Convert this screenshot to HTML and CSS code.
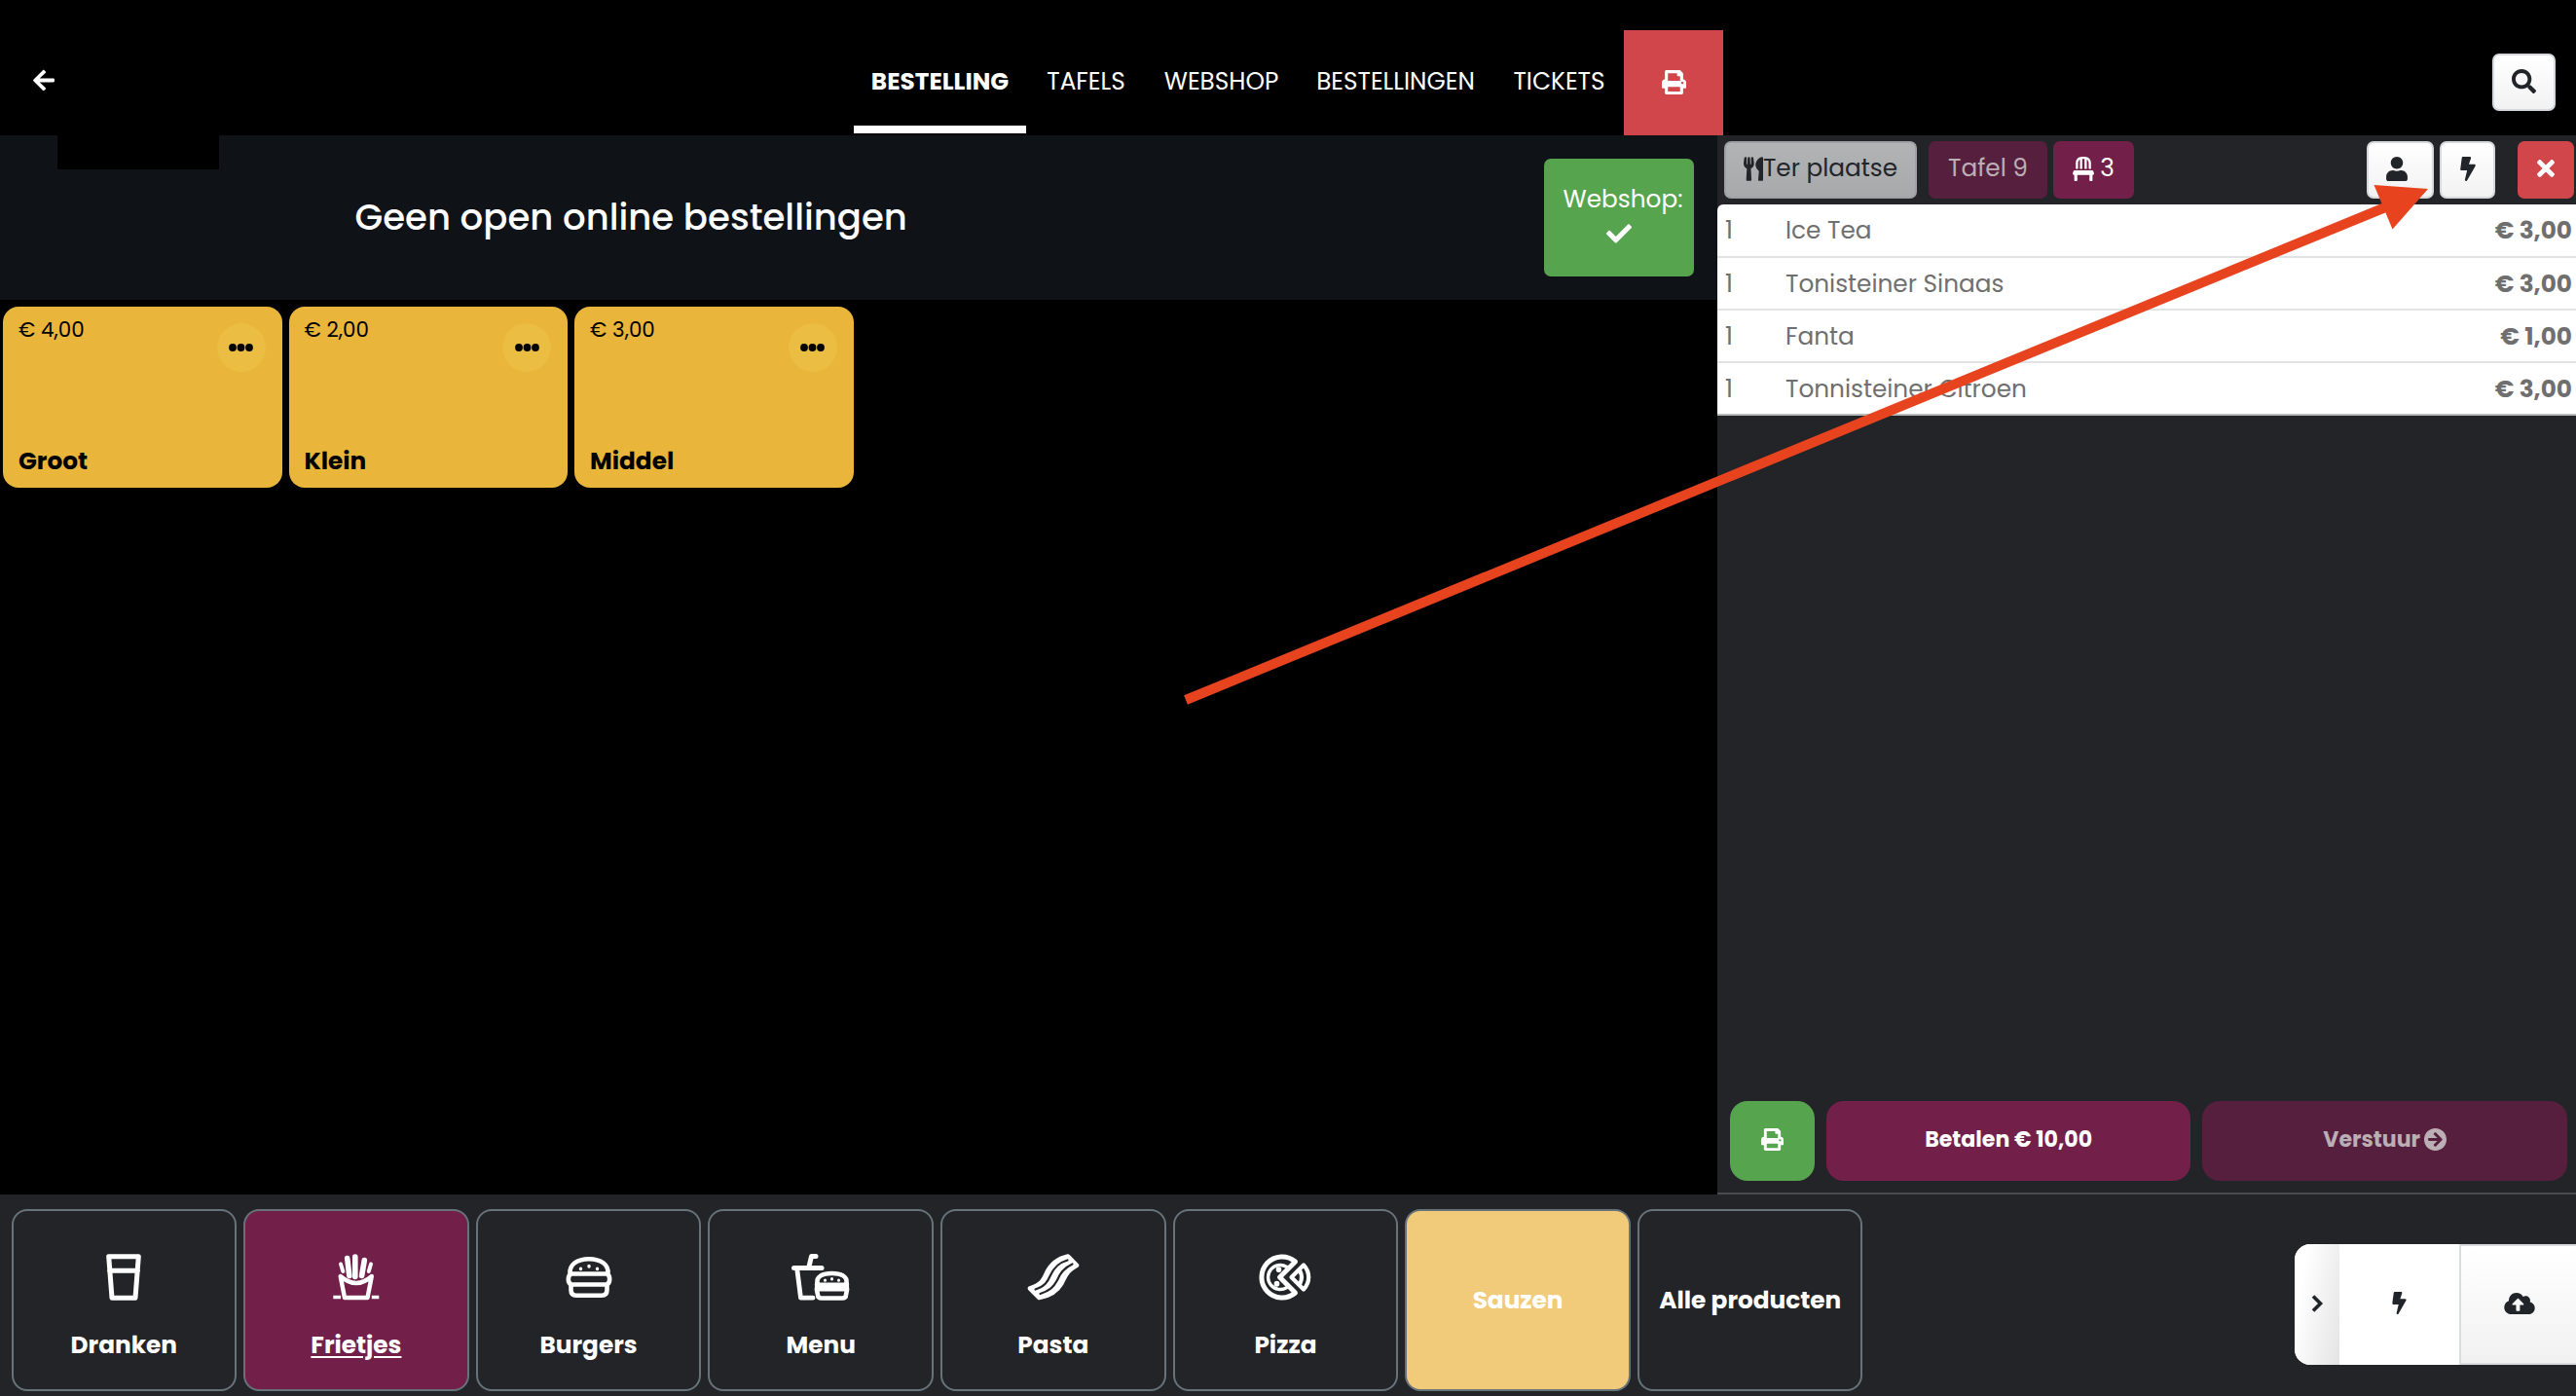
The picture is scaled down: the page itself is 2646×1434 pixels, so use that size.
FILE: index.html
```html
<!DOCTYPE html>
<html lang="nl">
<head>
<meta charset="utf-8">
<title>Kassa</title>
<link rel="stylesheet" href="styles.css">
</head>
<body>
<svg width="0" height="0" class="sprite" aria-hidden="true">
  <symbol id="bolt" viewBox="0 0 320 512"><path d="M296 160H180.6l42.6-129.8C227.2 15 215.7 0 200 0H56C44 0 33.8 8.9 32.2 20.8l-32 240C-1.7 275.2 9.5 288 24 288h118.7L96.6 482.5c-3.6 15.2 8 29.5 23.3 29.5 8.4 0 16.4-4.4 20.8-12l176-304c9.3-15.9-2.2-36-20.7-36z"/></symbol>
  <symbol id="print" viewBox="0 0 512 512"><path d="M448 192V77.25c0-8.49-3.37-16.62-9.37-22.63L393.37 9.37c-6-6-14.14-9.37-22.63-9.37H96C78.33 0 64 14.33 64 32v160c-35.35 0-64 28.65-64 64v112c0 8.84 7.16 16 16 16h48v96c0 17.67 14.33 32 32 32h320c17.67 0 32-14.33 32-32v-96h48c8.84 0 16-7.16 16-16V256c0-35.35-28.65-64-64-64zm-64 256H128v-96h256v96zm0-224H128V64h192v48c0 8.84 7.16 16 16 16h48v96zm48 72c-13.25 0-24-10.75-24-24 0-13.26 10.75-24 24-24s24 10.74 24 24c0 13.25-10.75 24-24 24z"/></symbol>
  <symbol id="dots" viewBox="0 0 25 8"><circle cx="4" cy="4" r="3.9"/><circle cx="12.5" cy="4" r="3.9"/><circle cx="21" cy="4" r="3.9"/></symbol>
</svg>

<header class="topbar">
  <svg class="back" viewBox="0 0 448 512"><path d="M257.5 445.1l-22.2 22.2c-9.4 9.4-24.6 9.4-33.9 0L7 273c-9.4-9.4-9.4-24.6 0-33.9L201.4 44.7c9.4-9.4 24.6-9.4 33.9 0l22.2 22.2c9.5 9.5 9.3 25-.4 34.3L136.6 216H424c13.3 0 24 10.7 24 24v32c0 13.3-10.7 24-24 24H136.6l120.5 114.8c9.8 9.3 10 24.8.4 34.3z"/></svg>
  <div class="brand"></div>
  <nav class="tabs">
    <a class="tab active">BESTELLING</a>
    <a class="tab">TAFELS</a>
    <a class="tab">WEBSHOP</a>
    <a class="tab">BESTELLINGEN</a>
    <a class="tab">TICKETS</a>
    <a class="tab-print"><svg><use href="#print"/></svg></a>
  </nav>
  <button class="btn light search"><svg viewBox="0 0 512 512"><path d="M505 442.7L405.3 343c-4.5-4.5-10.6-7-17-7H372c27.6-35.3 44-79.7 44-128C416 93.1 322.9 0 208 0S0 93.1 0 208s93.1 208 208 208c48.3 0 92.7-16.4 128-44v16.3c0 6.4 2.5 12.5 7 17l99.7 99.7c9.4 9.4 24.6 9.4 33.9 0l28.3-28.3c9.4-9.4 9.4-24.6.1-34zM208 336c-70.7 0-128-57.2-128-128 0-70.7 57.2-128 128-128 70.7 0 128 57.2 128 128 0 70.7-57.2 128-128 128z"/></svg></button>
</header>

<main class="main">
  <section class="catalog">
    <div class="banner">
      <h1 class="banner-title">Geen open online bestellingen</h1>
      <div class="webshop">
        <span class="webshop-label">Webshop:</span>
        <svg viewBox="0 0 512 512"><path d="M173.898 439.404l-166.4-166.4c-9.997-9.997-9.997-26.206 0-36.204l36.203-36.204c9.997-9.998 26.207-9.998 36.204 0L192 312.69 432.095 72.596c9.997-9.997 26.207-9.997 36.204 0l36.203 36.204c9.997 9.997 9.997 26.206 0 36.204l-294.4 294.401c-9.998 9.997-26.207 9.997-36.204-.001z"/></svg>
      </div>
    </div>
    <div class="products">
      <article class="product"><span class="price">€ 4,00</span><i class="more"><svg><use href="#dots"/></svg></i><b class="name">Groot</b></article>
      <article class="product"><span class="price">€ 2,00</span><i class="more"><svg><use href="#dots"/></svg></i><b class="name">Klein</b></article>
      <article class="product"><span class="price">€ 3,00</span><i class="more"><svg><use href="#dots"/></svg></i><b class="name">Middel</b></article>
    </div>
  </section>

  <aside class="order">
    <div class="order-bar">
      <button class="btn light place"><svg viewBox="0 0 416 512"><path d="M207.9 15.2c.8 4.7 16.1 94.5 16.1 128.8 0 52.3-27.8 89.6-68.9 104.6L168 486.7c.7 13.7-10.2 25.3-24 25.3H80c-13.7 0-24.7-11.5-24-25.3l12.9-238.1C27.7 233.6 0 196.2 0 144 0 109.6 15.3 19.9 16.1 15.2 19.3-5.1 61.4-5.4 64 16.3v141.2c1.3 3.4 15.1 3.2 16 0 1.4-25.3 7.9-139.2 8-141.8 3.3-20.8 44.7-20.8 47.9 0 .2 2.7 6.6 116.5 8 141.8.9 3.2 14.8 3.4 16 0V16.3c2.6-21.6 44.8-21.4 47.9-1.1zm119.2 285.7l-15 185.1c-1.2 14 9.9 26 23.9 26h56c13.3 0 24-10.7 24-24V24c0-13.2-10.7-24-24-24-82.5 0-221.4 178.5-64.9 300.9z"/></svg><span>Ter plaatse</span></button>
      <button class="btn plum table">Tafel 9</button>
      <button class="btn plum seats"><svg viewBox="0 0 448 512"><path d="M112 128c0-29.5 16.2-55 40-68.9V256h48V48h48v208h48V59.1c23.8 13.9 40 39.4 40 68.9v128h48V128C384 57.3 326.7 0 256 0h-64C121.3 0 64 57.3 64 128v128h48zm334.3 213.9l-10.7-32c-4.4-13.1-16.6-21.9-30.4-21.9H42.7c-13.8 0-26 8.8-30.4 21.9l-10.7 32C-5.2 362.6 10.2 384 32 384v112c0 8.8 7.2 16 16 16h32c8.8 0 16-7.2 16-16V384h256v112c0 8.8 7.2 16 16 16h32c8.8 0 16-7.2 16-16V384c21.8 0 37.2-21.4 30.3-42.1z"/></svg><span>3</span></button>
      <button class="btn light user"><svg viewBox="0 0 448 512"><path d="M224 256c70.7 0 128-57.3 128-128S294.7 0 224 0 96 57.3 96 128s57.3 128 128 128zm89.6 32h-16.7c-22.2 10.2-46.9 16-72.9 16s-50.6-5.8-72.9-16h-16.7C60.2 288 0 348.2 0 422.4V464c0 26.5 21.5 48 48 48h352c26.5 0 48-21.5 48-48v-41.6c0-74.2-60.2-134.4-134.4-134.4z"/></svg></button>
      <button class="btn light flash"><svg><use href="#bolt"/></svg></button>
      <button class="btn red close"><svg viewBox="0 0 352 512"><path d="M242.72 256l100.07-100.07c12.28-12.28 12.28-32.19 0-44.48l-22.24-22.24c-12.28-12.28-32.19-12.28-44.48 0L176 189.28 75.93 89.21c-12.28-12.28-32.19-12.28-44.48 0L9.21 111.45c-12.28 12.28-12.28 32.19 0 44.48L109.28 256 9.21 356.07c-12.28 12.28-12.28 32.19 0 44.48l22.24 22.24c12.28 12.28 32.2 12.28 44.48 0L176 322.72l100.07 100.07c12.28 12.28 32.2 12.28 44.48 0l22.24-22.24c12.28-12.28 12.28-32.19 0-44.48L242.72 256z"/></svg></button>
    </div>
    <ul class="lines">
      <li><span class="qty">1</span><span>Ice Tea</span><b>€ 3,00</b></li>
      <li><span class="qty">1</span><span>Tonisteiner Sinaas</span><b>€ 3,00</b></li>
      <li><span class="qty">1</span><span>Fanta</span><b>€ 1,00</b></li>
      <li><span class="qty">1</span><span>Tonnisteiner Citroen</span><b>€ 3,00</b></li>
    </ul>
    <div class="actions">
      <button class="act green"><svg><use href="#print"/></svg></button>
      <button class="act plum wide">Betalen € 10,00</button>
      <button class="act plum wide dim"><span>Verstuur</span><svg viewBox="8 8 496 496"><path d="M256 8c137 0 248 111 248 248S393 504 256 504 8 393 8 256 119 8 256 8zm-28.9 143.6l75.5 72.4H120c-13.3 0-24 10.7-24 24v16c0 13.3 10.7 24 24 24h182.6l-75.5 72.4c-9.7 9.3-9.9 24.8-.4 34.3l11 10.9c9.4 9.4 24.6 9.4 33.9 0L404.3 273c9.4-9.4 9.4-24.6 0-33.9L271.6 106.3c-9.4-9.4-24.6-9.4-33.9 0l-11 10.9c-9.5 9.6-9.3 25.1.4 34.4z"/></svg></button>
    </div>
  </aside>
</main>

<footer class="bottom">
  <div class="cats">
    <a class="cat"><svg viewBox="0 0 60 48"><path d="M14.7 2.7H45.3L42 45.2H18ZM15.5 17.2H44.5" stroke-width="5"/></svg><span>Dranken</span></a>
    <a class="cat selected"><svg viewBox="0 0 60 48"><path d="M13.7 23 18 45H41.5L45.8 23Q30 37 13.7 23Z" stroke-width="4.4"/><path d="M14 10.5 16.3 18M45 10.5 42.8 18" stroke-width="4"/><path d="M20.7 4.5 22.8 22.5M28.8 3V23.5M38.3 6.5 35.6 22.5" stroke-width="5.6"/><path d="M6.3 44.5H14M45.8 44.5H53.3" stroke-width="3.6" stroke-linecap="butt"/></svg><span>Frietjes</span></a>
    <a class="cat"><svg viewBox="0 0 60 48"><path d="M10.5 20.5C9.5 11 18 5.2 30 5.2S50.5 11 49.5 20.5ZM12 20.5Q8.800 21.500 8.800 26T12 31.500H48Q51.200 30.500 51.200 26T48 20.500M11.500 31.500V37Q11.500 42.700 17 42.700H43Q48.500 42.700 48.500 37V31.500" stroke-width="4.600"/><path d="M21.500 15.200V15.600M30 12.500V13M38.500 15.200V15.600" stroke-width="3.400"/></svg><span>Burgers</span></a>
    <a class="cat"><svg viewBox="0 0 60 48"><path d="M25 2.500H20.500L18 13" stroke-width="5"/><path d="M2.500 14.500H31" stroke-width="5"/><path d="M5.800 16 9.500 45.200H22" stroke-width="4.800"/><path d="M26.500 30C25.500 23 32 20 41.500 20S57.500 23 56.500 30L57 37 56 42Q56 45.500 52 45.500H31Q27 45.500 27 42L26 37Z" stroke-width="4.600"/><path d="M26 31.800H57M26 36.200H57" stroke-width="4.600"/><path d="M34.500 27V27.300M41.500 25.500V26M48.500 27V27.300" stroke-width="3"/></svg><span>Menu</span></a>
    <a class="cat"><svg viewBox="0 0 60 48"><path d="M45 2.500 54 11.800C43 18 43 22 38.500 30C34 38 26 43 15.500 45L6 35.500C17 32 19.500 28 23 20C27 11 34 5 45 2.500Z" fill="#fff" stroke-width="4.600"/><path d="M11.500 36.500C21 33.500 24 29 27 22C31 13 36 9 44.500 6.500M16.500 41C26 38 30 34.500 34 27C37 19 41 14.500 49.500 10.500" stroke="#232428" stroke-width="2.200"/></svg><span>Pasta</span></a>
    <a class="cat"><svg viewBox="0 0 60 48"><path d="M40.500 8A21 21 0 1 0 40.500 40L24.500 24Z" stroke-width="5"/><path d="M31.500 13.300A12.500 12.500 0 1 0 31.500 34.700" stroke-width="3.400"/><path d="M23.500 16V16.300M21.500 30.500V31" stroke-width="5.600"/><path d="M36.500 24 49 11.500Q54.200 17 54.200 24T49 36.500ZM45.500 18Q48.500 24 45.500 30" stroke-width="4.200"/></svg><span>Pizza</span></a>
    <a class="cat sand plain"><span>Sauzen</span></a>
    <a class="cat plain"><span>Alle producten</span></a>
  </div>
  <div class="drawer">
    <div class="drawer-toggle"><svg viewBox="0 0 14 20"><path d="M3 2.500 10.500 10 3 17.500"/></svg></div>
    <div class="drawer-cell"><svg class="d-bolt"><use href="#bolt"/></svg></div>
    <div class="drawer-cell shaded"><svg class="d-cloud" viewBox="0 32 640 448"><path d="M537.6 226.6c4.1-10.7 6.4-22.4 6.4-34.6 0-53-43-96-96-96-19.7 0-38.1 6-53.3 16.2C367 64.2 315.3 32 256 32c-88.4 0-160 71.6-160 160 0 2.7.1 5.4.2 8.1C40.2 219.8 0 273.2 0 336c0 79.5 64.5 144 144 144h368c70.7 0 128-57.3 128-128 0-61.9-44-113.6-102.4-125.4zM393.4 288H328v112c0 8.8-7.2 16-16 16h-48c-8.8 0-16-7.2-16-16V288h-65.4c-14.3 0-21.4-17.2-11.3-27.3l105.4-105.4c6.2-6.2 16.4-6.2 22.6 0l105.4 105.4c10.1 10.1 2.9 27.3-11.3 27.3z"/></svg></div>
  </div>
</footer>

<svg class="pointer" viewBox="0 0 2646 1434"><path d="M1218 719 2455 211" fill="none" stroke="#e8431f" stroke-width="10"/><path d="M2438.500 190 2494 194 2457.500 235.500Z" fill="#e8431f"/></svg>
</body>
</html>
```
FILE: styles.css
```css
* { box-sizing: border-box; }

body {
  margin: 0;
  width: 2646px;
  height: 1434px;
  overflow: hidden;
  display: flex;
  flex-direction: column;
  background: #000;
  color: #fff;
  font-family: Poppins, Inter, "Noto Sans", sans-serif;
  font-size: 24.75px;
  line-height: 36px;
}

svg { display: block; fill: currentColor; flex: none; }
.sprite { position: absolute; }
button { font: inherit; color: inherit; border: 0; padding: 0; }

/* Top bar */
.topbar {
  position: relative;
  height: 139px;
  flex: none;
  display: flex;
  align-items: flex-start;
}
.back { width: 22px; height: 25px; margin: 70px 0 0 34px; }
.brand { position: absolute; left: 59px; top: 60px; width: 166px; height: 114px; background: #000; }
.tabs { display: flex; height: 108px; margin: 31px 0 0 821px; }
.tab {
  display: flex;
  align-items: center;
  justify-content: center;
  height: 106px;
  border-bottom: 8px solid transparent;
  padding: 7px 0 0 1px;
  white-space: nowrap;
}
.tab:nth-child(1) { width: 177px; }
.tab:nth-child(2) { width: 122px; }
.tab:nth-child(3) { width: 156px; }
.tab:nth-child(4) { width: 202px; }
.tab:nth-child(5) { width: 134px; }
.tab.active { font-weight: 700; border-color: #fff; padding-left: 0; }
.tab-print {
  width: 102px;
  display: flex;
  align-items: center;
  justify-content: center;
  padding-bottom: 2px;
  background: #d1464a;
}
.tab-print svg { width: 25px; height: 25px; }
.search { width: 65px; margin: 55px 21px 0 auto; }
.search svg { width: 25px; height: 25px; }

/* Buttons */
.btn {
  height: 59px;
  border-radius: 7px;
  display: flex;
  align-items: center;
  justify-content: center;
  flex: none;
  white-space: nowrap;
  padding-bottom: 2px;
}
.light {
  color: #212529;
  background: linear-gradient(#fff, #f2f2f2);
  border: 2px solid #d5d8dc;
}
.plum { background: #721f4a; }
.red { background: #d1464a; }
.green { background: #57a44f; }

/* Main */
.main { display: flex; height: 1088px; flex: none; }
.catalog { width: 1764px; }
.banner {
  height: 169px;
  background: #0f1217;
  display: flex;
  align-items: center;
  justify-content: space-between;
  padding-right: 24px;
}
.banner-title {
  margin: 0 0 2px 364.5px;
  font-size: 37.1px;
  line-height: 54px;
  font-weight: 500;
  white-space: nowrap;
}
.webshop {
  width: 154px;
  height: 121px;
  border-radius: 7px;
  background: #57a44f;
  display: flex;
  flex-direction: column;
  align-items: center;
  padding: 24px 0 0 8px;
}
.webshop svg { width: 26px; height: 26px; margin: 4px 8px 0 0; }

.products { display: flex; gap: 7px; padding: 7px 3px; }
.product {
  width: 286.5px;
  height: 186px;
  border-radius: 16px;
  background: #e9b53a;
  color: #000;
  padding: 8px 17px 9px 16px;
  display: grid;
  grid-template-columns: 1fr 50px;
  align-content: space-between;
}
.price { font-size: 21.4px; line-height: 32px; }
.more {
  width: 50px;
  height: 50px;
  margin-top: 9px;
  border-radius: 50%;
  background: #ebbd43;
  display: flex;
  align-items: center;
  justify-content: center;
}
.more svg { width: 25px; height: 8px; }
.name { font-weight: 700; }

/* Order panel */
.order {
  width: 882px;
  background: #232428;
  border-bottom: 2px solid #4a4b4f;
  display: flex;
  flex-direction: column;
}
.order-bar { height: 71px; display: flex; align-items: flex-start; padding: 5.5px 2px 0 7px; }
.order-bar svg { height: 25px; }
.place { width: 198px; margin-right: 12px; background: linear-gradient(#b2b3b4, #a8a9aa); border-color: #9da1a5; }
.place svg { width: 20px; }
.table { width: 122px; margin-right: 6px; background: #561f3e; color: #bbafb5; }
.seats { width: 83px; gap: 6px; }
.seats svg { width: 22px; }
.user { width: 69px; margin-left: auto; margin-right: 6px; }
.user svg { width: 22px; margin-right: 7px; }
.flash { width: 57px; margin-right: 23px; }
.flash svg { width: 16px; }
.close { width: 58px; }
.close svg { width: 18px; height: 26px; }

.lines {
  list-style: none;
  margin: 0;
  padding: 0;
  background: #fff;
  color: #6f6f6f;
  border-radius: 6px 0 0 0;
}
.lines li { height: 54px; display: flex; align-items: center; padding: 1px 4px 0 8px; border-bottom: 2px solid #e2e3e4; }
.lines li:first-child { height: 55px; padding-top: 0; }
.lines li:last-child { border-color: #b9babb; }
.qty { width: 62px; }
.lines b { margin-left: auto; font-weight: 700; }

.actions { margin-top: auto; height: 94px; display: flex; gap: 12px; padding: 0 9px 12px 13px; font-size: 22.1px; font-weight: 700; }
.act { border-radius: 18px; width: 87px; display: flex; align-items: center; justify-content: center; gap: 4px; white-space: nowrap; }
.act.wide { width: 375px; padding-bottom: 3px; }
.act svg { width: 23px; height: 23px; }
.act.green svg { margin-bottom: 3px; }
.act.dim { background: #561f3e; color: #bbafb5; }

/* Category bar */
.bottom { flex: 1; background: #232428; display: flex; justify-content: space-between; }
.cats { display: flex; gap: 7.15px; padding: 15px 0 5px 11.5px; }
.cat {
  width: 231.5px;
  border: 2px solid #66737b;
  border-radius: 16px;
  display: flex;
  flex-direction: column;
  align-items: center;
  justify-content: center;
  gap: 28px;
  padding-top: 16px;
  font-weight: 700;
  white-space: nowrap;
}
.cat svg { width: 60px; height: 48px; fill: none; stroke: #fff; stroke-linecap: round; stroke-linejoin: round; }
.cat.plain { padding-top: 0; }
.cat.selected { background: #721f4a; }
.cat.selected span { text-decoration: underline; text-decoration-thickness: 2px; text-underline-offset: 3px; }
.cat.sand { background: #f1cb79; }

.drawer {
  width: 289px;
  height: 124px;
  margin-top: 51px;
  border-radius: 16px 0 0 16px;
  background: #fff;
  color: #212529;
  display: flex;
  overflow: hidden;
}
.drawer > div { display: flex; align-items: center; justify-content: center; flex: none; }
.drawer > .drawer-toggle { width: 46px; padding-bottom: 3px; background: linear-gradient(100deg, #fff 20%, #e4e4e4); }
.drawer-toggle svg { width: 14px; height: 20px; fill: none; stroke: #212529; stroke-width: 3.6; }
.drawer-cell { width: 123px; padding-bottom: 3px; }
.shaded { width: 124px; background: linear-gradient(#fff, #f1f1f1); border: 2px solid #d9dce0; }
.d-bolt { width: 15px; height: 23px; }
.d-cloud { width: 32px; height: 22px; }

.pointer { position: absolute; left: 0; top: 0; width: 2646px; height: 1434px; pointer-events: none; }
```
